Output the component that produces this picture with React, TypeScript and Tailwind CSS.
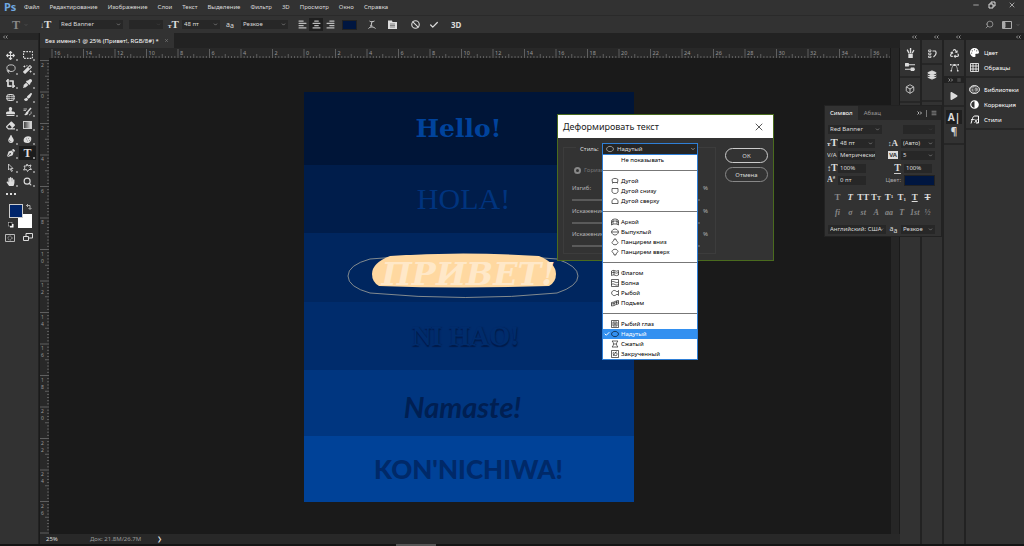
import type { ReactNode } from 'react'
import clsx from 'clsx'
import {
  Ban,
  Box,
  Check,
  ChevronDown,
  Lasso,
  Layers,
  Menu,
  Minus,
  Search,
  SquareDashed,
  X,
} from 'lucide-react'
import {
  FaAlignCenter,
  FaAlignLeft,
  FaAlignRight,
  FaAdjust,
  FaArrowsAlt,
  FaCropAlt,
  FaEraser,
  FaEyeDropper,
  FaHandPaper,
  FaMagic,
  FaPaintBrush,
  FaPalette,
  FaPenNib,
  FaPlay,
  FaRecycle,
  FaStamp,
  FaTint,
} from 'react-icons/fa'

const menuItems = [
  'Файл',
  'Редактирование',
  'Изображение',
  'Слои',
  'Текст',
  'Выделение',
  'Фильтр',
  '3D',
  'Просмотр',
  'Окно',
  'Справка',
]

export default function App() {
  return (
    <div className="relative flex h-screen flex-col overflow-hidden bg-[#1a1a1a] font-['Noto_Sans',sans-serif] text-[6px] leading-[8px] text-[#dcdcdc]">
      <MenuBar />
      <OptionsBar />
      <div className="flex min-h-0 flex-1">
        <Toolbox />
        <Workspace />
        <SidePanels />
      </div>
      <div className="flex h-[2px] shrink-0 justify-center bg-[#141414]">
        <div className="mr-48 w-10 bg-[#555]" />
      </div>
      <WarpDialog />
      <CharacterPanel />
    </div>
  )
}

function MenuBar() {
  return (
    <header className="flex h-4 shrink-0 items-center border-b border-[#2a2a2a] bg-[#323232] pr-2 pb-px pl-1">
      <div className="w-5 text-[11px] leading-[14px] font-bold text-[#6fa8e0]">Ps</div>
      <nav className="flex flex-1 items-center gap-[10px]">
        {menuItems.map((item) => (
          <button key={item}>{item}</button>
        ))}
      </nav>
      <div className="flex items-center gap-2 pb-1">
        <button aria-label="Свернуть">
          <Minus size={8} />
        </button>
        <button aria-label="Восстановить">
          <svg width="8" height="8" viewBox="0 0 16 16" fill="none" stroke="currentColor" strokeWidth="2">
            <path d="M2 6h8v8H2zM6 6V2h8v8h-4" />
          </svg>
        </button>
        <button aria-label="Закрыть" className="ml-1">
          <X size={8} />
        </button>
      </div>
    </header>
  )
}

interface PickerProps {
  label: string
  value?: string
  className: string
  disabled?: boolean
}

function Picker({ label, value = '', className, disabled }: PickerProps) {
  return (
    <div className={clsx('relative h-[9px] shrink-0 bg-[#272727]', className)}>
      <select
        aria-label={label}
        disabled={disabled}
        className="block h-full w-full appearance-none pl-[2px] leading-[9px] outline-none"
      >
        <option>{value}</option>
      </select>
      <ChevronDown
        size={5}
        strokeWidth={3}
        className={clsx(
          'pointer-events-none absolute top-[2px] right-[2px]',
          disabled ? 'text-[#444]' : 'text-[#999]',
        )}
      />
    </div>
  )
}

function Glyph({ children, className }: { children: ReactNode; className?: string }) {
  return (
    <span className={clsx("font-['Liberation_Serif',serif] leading-[10px] font-bold", className)}>
      {children}
    </span>
  )
}

function SizeIcon() {
  return (
    <Glyph className="text-[11px]">
      <span className="text-[7px]">т</span>T
    </Glyph>
  )
}

function AntiAliasIcon() {
  return (
    <span className="text-[7px]">
      a<sub className="text-[7px]">a</sub>
    </span>
  )
}

function OptionsBar() {
  return (
    <div className="flex h-[17px] shrink-0 items-center bg-[#323232] pr-1">
      <div className="flex w-10 items-center gap-1 pl-3 text-[#888]">
        <Glyph className="text-[12px]">T</Glyph>
        <ChevronDown size={4} />
      </div>
      <button aria-label="Ориентация текста" className="w-[19px] text-left">
        <Glyph className="text-[11px]">
          <span className="text-[8px]">↓</span>T
        </Glyph>
      </button>
      <Picker label="Гарнитура" value="Red Banner" className="w-16" />
      <Picker label="Начертание" disabled className="ml-[6px] w-[34px]" />
      <div className="w-[19px] pl-[5px]">
        <SizeIcon />
      </div>
      <Picker label="Кегль" value="48 пт" className="w-[38px]" />
      <div className="w-[21px] pl-[6px]">
        <AntiAliasIcon />
      </div>
      <Picker label="Сглаживание" value="Резкое" className="w-[47px]" />
      <div className="ml-[7px] flex text-[#bbb]">
        <button aria-label="Влево" className="flex h-[13px] w-[14px] items-center justify-center">
          <FaAlignLeft size={9} />
        </button>
        <button aria-label="По центру" className="flex h-[13px] w-[14px] items-center justify-center bg-[#1f1f1f]">
          <FaAlignCenter size={9} />
        </button>
        <button aria-label="Вправо" className="flex h-[13px] w-[14px] items-center justify-center">
          <FaAlignRight size={9} />
        </button>
      </div>
      <button aria-label="Цвет текста" className="ml-[5px] h-[10px] w-[15px] border border-[#222] bg-[#001640]" />
      <button aria-label="Деформировать" className="ml-[11px]">
        <svg width="8" height="9" viewBox="0 0 16 18" fill="none" stroke="currentColor" strokeWidth="1.8">
          <path d="M3 2c3 2 6 2 10 0M8 3L6 12M4 12h5M1 17c3-4 10-4 14 0" />
        </svg>
      </button>
      <button aria-label="Панели" className="ml-3">
        <svg width="9" height="9" viewBox="0 0 18 18" fill="#ddd">
          <path d="M0 1h8l1 3h9v14H0z" />
          <path d="M4 8h10M4 11h10M4 14h10" stroke="#444" strokeWidth="1.2" />
        </svg>
      </button>
      <button aria-label="Отменить" className="ml-[14px]">
        <Ban size={9} strokeWidth={3} />
      </button>
      <button aria-label="Применить" className="ml-[9px]">
        <Check size={10} strokeWidth={3} />
      </button>
      <button className="ml-3 text-[8px] font-bold">3D</button>
      <div className="flex-1" />
      <button aria-label="Поиск" className="mr-2 text-[#aaa]">
        <Search size={9} className="-scale-x-100" />
      </button>
      <button aria-label="Рабочая среда" className="flex items-center gap-1 text-[#aaa]">
        <svg width="10" height="8" viewBox="0 0 20 16" fill="none" stroke="currentColor" strokeWidth="2">
          <path d="M1 1h18v14H1z" />
          <path d="M2 3h4v10H2z" fill="currentColor" />
        </svg>
        <ChevronDown size={4} />
      </button>
    </div>
  )
}

function SvgIcon({ children, size = 9 }: { children: ReactNode; size?: number }) {
  return (
    <svg
      width={size}
      height={size}
      viewBox="0 0 18 18"
      fill="none"
      stroke="currentColor"
      strokeWidth="2"
      strokeLinejoin="round"
    >
      {children}
    </svg>
  )
}

const tools: { name: string; icon: ReactNode; active?: boolean }[] = [
  { name: 'Перемещение', icon: <FaArrowsAlt size={9} /> },
  { name: 'Прямоугольная область', icon: <SvgIcon size={10}><path d="M1 3h16v12H1z" strokeDasharray="3 2" /></SvgIcon> },
  { name: 'Лассо', icon: <Lasso size={10} /> },
  { name: 'Волшебная палочка', icon: <FaMagic size={9} /> },
  { name: 'Рамка', icon: <FaCropAlt size={9} /> },
  { name: 'Пипетка', icon: <FaEyeDropper size={9} /> },
  {
    name: 'Заплатка',
    icon: (
      <SvgIcon>
        <rect x="2" y="3" width="14" height="12" rx="3" />
        <path d="M0 7h18M0 11h18M6 3v12M12 3v12" strokeWidth="1.2" />
      </SvgIcon>
    ),
  },
  { name: 'Кисть', icon: <FaPaintBrush size={8} /> },
  { name: 'Штамп', icon: <FaStamp size={9} /> },
  {
    name: 'Архивная кисть',
    icon: (
      <SvgIcon>
        <path d="M16 2l-7 8" strokeWidth="3" />
        <path d="M9 9c-4 0-3 5-7 7 5 1 9-1 9-5z" fill="currentColor" stroke="none" />
        <path d="M1 4h7M1 7h5M12 16c4-1 5-4 4-7" strokeWidth="1.5" />
      </SvgIcon>
    ),
  },
  { name: 'Ластик', icon: <FaEraser size={9} /> },
  {
    name: 'Градиент',
    icon: <span className="block h-[8px] w-[9px] border border-[#ccc] bg-linear-to-r from-[#444] to-[#ddd]" />,
  },
  { name: 'Размытие', icon: <FaTint size={8} /> },
  {
    name: 'Губка',
    icon: (
      <SvgIcon>
        <path
          d="M2 7c3-5 9-6 14-3 1 4 1 8-3 11-4 2-8 1-11-1-1-2-1-5 0-7z"
          fill="currentColor"
          stroke="none"
        />
        <path d="M6 8h1M10 7h1M8 12h1M12 11h1" stroke="#555" />
      </SvgIcon>
    ),
  },
  { name: 'Перо', icon: <FaPenNib size={8} /> },
  { name: 'Текст', icon: <Glyph className="text-[12px]">T</Glyph>, active: true },
  {
    name: 'Выделение контура',
    icon: (
      <SvgIcon>
        <path d="M5 2v12l3-3 3 6 2-1-3-5h4z" strokeWidth="1.6" />
      </SvgIcon>
    ),
  },
  {
    name: 'Произвольная фигура',
    icon: (
      <SvgIcon>
        <path d="M8 2l2 4 6-2-2 5 3 4-5 0-3 4-2-4-6 1 3-4-2-4 5 0z" strokeWidth="1.8" />
      </SvgIcon>
    ),
  },
  { name: 'Рука', icon: <FaHandPaper size={9} /> },
  { name: 'Масштаб', icon: <Search size={9} strokeWidth={3} /> },
]

function Toolbox() {
  return (
    <aside className="flex w-[39px] shrink-0 flex-col border-r border-[#222] bg-[#323232]">
      <div className="flex h-[7px] items-center bg-[#262626] pl-[3px] text-[#aaa]">
        <DoubleChevron left />
      </div>
      <div className="mt-2 grid grid-cols-2 px-[2px]">
        {tools.map((tool) => (
          <button
            key={tool.name}
            aria-label={tool.name}
            className={clsx(
              'relative flex h-[14px] items-center justify-center',
              tool.active && 'bg-[#1c1c1c]',
            )}
          >
            {tool.icon}
            <span className="absolute right-[1px] bottom-[1px] size-[2px] bg-[#888]" />
          </button>
        ))}
        <button aria-label="Ещё" className="flex h-[12px] items-center justify-center gap-[2px]">
          <span className="size-[2px] bg-[#ddd]" />
          <span className="size-[2px] bg-[#ddd]" />
          <span className="size-[2px] bg-[#ddd]" />
        </button>
      </div>
      <div className="relative mt-1 ml-2 h-6 w-6">
        <button aria-label="Цвет фона" className="absolute right-0 bottom-0 size-[14px] bg-white" />
        <button
          aria-label="Основной цвет"
          className="absolute top-0 left-[1px] size-[14px] border border-[#ccc] bg-[#00256b]"
        />
        <svg className="absolute top-0 right-0" width="6" height="6" viewBox="0 0 12 12" fill="none" stroke="#ccc" strokeWidth="1.6">
          <path d="M4 0L1 3l3 3M1 3h7v7M5 8l3 3 3-3" />
        </svg>
        <svg className="absolute bottom-0 left-0" width="6" height="6" viewBox="0 0 12 12">
          <rect x="4" y="4" width="7" height="7" fill="#fff" />
          <rect x="1" y="1" width="7" height="7" fill="#111" stroke="#ccc" />
        </svg>
      </div>
      <div className="mt-[5px] flex gap-2 pl-[5px]">
        <button aria-label="Быстрая маска">
          <svg width="10" height="8" viewBox="0 0 20 16" fill="none" stroke="currentColor" strokeWidth="1.6">
            <path d="M1 1h18v14H1z" />
            <circle cx="10" cy="8" r="4" strokeDasharray="2 1.5" />
          </svg>
        </button>
        <button aria-label="Режим экрана">
          <svg width="10" height="9" viewBox="0 0 20 18" fill="none" stroke="currentColor" strokeWidth="2">
            <path d="M6 1h13v9H6z" />
            <path d="M1 7h10v8H1z" fill="#323232" />
          </svg>
        </button>
      </div>
    </aside>
  )
}

function DoubleChevron({ left }: { left?: boolean }) {
  return (
    <svg width="5" height="4" viewBox="0 0 10 8" fill="none" stroke="currentColor" strokeWidth="1.6">
      <path d={left ? 'M4 1L1 4l3 3M9 1L6 4l3 3' : 'M1 1l3 3-3 3M6 1l3 3-3 3'} />
    </svg>
  )
}

// distance between two labelled marks, i.e. two centimetres at 25%
const RULER_STEP = 31.5

function ticksFor(origin: number, length: number) {
  const ticks: { pos: number; index: number }[] = []
  const first = Math.ceil((-origin / RULER_STEP) * 10)
  for (let i = first; origin + (i * RULER_STEP) / 10 < length; i++) {
    ticks.push({ pos: origin + (i * RULER_STEP) / 10, index: i })
  }
  return ticks
}

function tickLength(index: number) {
  if (index % 10 === 0) return 9
  return index % 5 === 0 ? 4 : 2
}

function HorizontalRuler() {
  return (
    <svg className="block h-[10px] w-full bg-[#282828]">
      {ticksFor(264, 850)
        .filter((t) => t.pos > 9)
        .map(({ pos, index }) => (
          <g key={index}>
            <path d={`M${pos} 10v-${tickLength(index)}`} stroke="#777" strokeWidth="0.7" />
            {index % 10 === 0 && (
              <text x={pos + 2} y="7" fontSize="5.5" fill="#999">
                {Math.abs(index / 5)}
              </text>
            )}
          </g>
        ))}
    </svg>
  )
}

function VerticalRuler() {
  return (
    <svg className="h-full w-[9px] shrink-0 bg-[#282828]">
      {ticksFor(34, 476).map(({ pos, index }) => (
        <g key={index}>
          <path d={`M9 ${pos}h-${tickLength(index)}`} stroke="#777" strokeWidth="0.7" />
          {index % 10 === 0 &&
            pos < 460 &&
            String(Math.abs(index / 5))
              .split('')
              .map((digit, i) => (
                <text key={i} x="1" y={pos + 6 + i * 7} fontSize="5" fill="#999">
                  {digit}
                </text>
              ))}
        </g>
      ))}
    </svg>
  )
}

function Workspace() {
  return (
    <main className="flex min-w-0 flex-1 flex-col pl-[1px]">
      <div className="flex h-[15px] shrink-0 bg-[#222]">
        <div className="flex items-center gap-[5px] bg-[#323232] px-[5px] text-white">
          Без имени-1 @ 25% (Привет!, RGB/8#) *
          <button aria-label="Закрыть вкладку" className="text-[#999]">
            <X size={5} />
          </button>
        </div>
      </div>
      <div className="flex min-h-0 flex-1">
        <div className="flex min-w-0 flex-1 flex-col">
          <HorizontalRuler />
          <div className="flex min-h-0 flex-1">
            <VerticalRuler />
            <div className="flex min-w-0 flex-1 items-center justify-center pt-0.5 pr-0.5">
              <Artboard />
            </div>
          </div>
        </div>
        <div className="w-[10px] border-x border-[#1a1a1a] bg-[#262626]" />
      </div>
      <footer className="flex h-[10px] shrink-0 items-center bg-[#282828] pl-[6px]">
        <div className="w-11">25%</div>
        <div className="w-[67px] text-[#999]">Док: 21.8M/26.7M</div>
        <div>❯</div>
      </footer>
    </main>
  )
}

function Artboard() {
  return (
    <div className="flex w-[330px] flex-col text-center leading-[30px]">
      <div className="flex h-[73px] items-center justify-center bg-[#001538]">
        <span className="mr-5 font-['DejaVu_Serif',serif] text-[25px] font-bold text-[#00439c]">Hello!</span>
      </div>
      <div className="flex h-[68px] items-center justify-center bg-[#001d4b]">
        <span className="mr-[10px] font-['Liberation_Serif',serif] text-[30px] text-[#00347e]">HOLA!</span>
      </div>
      <div className="relative flex h-[69px] items-center justify-center bg-[#00265f]">
        <svg className="absolute -left-[2px] top-[18px] h-[50px] w-[332px]" viewBox="0 0 332 50" fill="none">
          <path
            d="M68 8Q46 14 46 25T68 42Q165 51 255 42Q276 35 276 25T255 8Q160 -1 68 8Z"
            stroke="#a3a39a"
            strokeWidth="0.8"
          />
          <path d="M88 5Q70 12 70 23Q70 31 77 35Q160 38 247 35Q254 31 254 23Q254 12 237 5Q160 0 88 5Z" fill="#ffd8a0" />
        </svg>
        <span className="relative mt-[13px] font-['DejaVu_Serif',serif] text-[32px] font-bold text-[#ffe8c8] italic">
          ПРИВЕТ!
        </span>
      </div>
      <div className="flex h-[68px] items-center justify-center bg-[#002c6c]">
        <span className="mr-[6px] font-['Liberation_Serif',serif] text-[27px] font-bold text-[#002c6c] [text-shadow:0_2px_1px_#001b4a,1px_0_1px_#00235a]">
          NI HAO!
        </span>
      </div>
      <div className="flex h-[66px] items-center justify-center bg-[#003680]">
        <span className="mt-2 mr-3 font-['Lato',sans-serif] text-[29px] font-bold text-[#001f52] italic">
          Namaste!
        </span>
      </div>
      <div className="flex h-[66px] items-center justify-center bg-[#004298]">
        <span className="font-['Lato',sans-serif] text-[26px] font-black text-[#002968]">KON'NICHIWA!</span>
      </div>
    </div>
  )
}

function SideButton({ label, children, active }: { label: string; children: ReactNode; active?: boolean }) {
  return (
    <button
      aria-label={label}
      className={clsx('flex h-[14px] w-full items-center justify-center', active && 'bg-[#1f1f1f]')}
    >
      {children}
    </button>
  )
}

const libraryPanels = [
  { name: 'Библиотеки', icon: 'cloud' },
  { name: 'Коррекция', icon: 'adjust' },
  { name: 'Стили', icon: 'fx' },
]

function PanelIcon({ icon }: { icon: string }) {
  if (icon === 'adjust') return <FaAdjust size={9} className="-scale-x-100" />
  if (icon === 'fx') {
    return (
      <SvgIcon>
        <path d="M2 17L5 7c1-4 3-5 5-5h7v14h-5" />
        <path d="M2 9h6M9 8l6 8M15 8l-6 8" strokeWidth="1.6" />
      </SvgIcon>
    )
  }
  return (
    <svg width="11" height="9" viewBox="0 0 22 18" fill="none" stroke="currentColor" strokeWidth="1.6">
      <ellipse cx="11" cy="9" rx="10" ry="8" fill="#999" />
      <circle cx="8" cy="10" r="4" stroke="#333" />
      <circle cx="14" cy="9" r="5" stroke="#333" />
    </svg>
  )
}

function SidePanels() {
  return (
    <aside className="flex w-[124px] shrink-0 flex-col bg-[#222]">
      <div className="flex h-[7px] items-center gap-0.5 text-[#aaa]">
        {[0, 1, 2].map((i) => (
          <div key={i} className="flex w-5 justify-end pr-[3px]">
            <DoubleChevron left />
          </div>
        ))}
        <div className="flex flex-1 justify-end pr-[3px]">
          <DoubleChevron left />
        </div>
      </div>
      <div className="flex flex-1 gap-0.5">
        <div className="w-5 bg-[#323232] pt-[6px]">
          <SideButton label="Кисти">
            <SvgIcon size={10}>
              <path d="M6 10h8v8H6z" fill="currentColor" stroke="none" />
              <path d="M7 9L4 3M10 9V0M13 9l3-5" strokeWidth="2.5" />
            </SvgIcon>
          </SideButton>
          <SideButton label="Параметры кисти">
            <SvgIcon size={10}>
              <path d="M0 5h18M0 13h18" />
              <path d="M1 3h5v4H1zM11 11h5v4h-5z" fill="currentColor" />
            </SvgIcon>
          </SideButton>
          <div className="mt-[2px] mb-[4px] border-t-2 border-[#262626]" />
          <SideButton label="3D">
            <Box size={10} />
          </SideButton>
          <div className="mt-[5px] border-t-2 border-[#262626]" />
        </div>
        <div className="w-5 bg-[#323232] pt-[6px]">
          <SideButton label="История">
            <SvgIcon size={9}>
              <path d="M1 2h5v3H1zM1 8h5v3H1zM1 14h5v3H1z" strokeWidth="1.6" />
              <path d="M9 4h6c3 5 0 9-4 12" strokeWidth="2.4" />
            </SvgIcon>
          </SideButton>
          <div className="my-[3px] border-t-2 border-[#262626]" />
          <SideButton label="Слои">
            <Layers size={10} fill="currentColor" />
          </SideButton>
          <div className="mt-[18px] border-t-2 border-[#262626]" />
        </div>
        <div className="w-5 bg-[#323232] pt-[6px]">
          <SideButton label="Каналы">
            <FaRecycle size={9} />
          </SideButton>
          <SideButton label="Контуры">
            <SvgIcon>
              <path d="M3 4h12M3 16C3 9 6 4 9 4s6 5 6 12" strokeWidth="1.5" />
              <path d="M0 2h3v3H0zM15 2h3v3h-3zM7 2h4v4H7zM1 14h3v3H1zM14 14h3v3h-3z" fill="currentColor" stroke="none" />
            </SvgIcon>
          </SideButton>
          <div className="mt-[2px] flex h-[7px] items-center justify-end gap-[4px] bg-[#222] pr-[3px] text-[#aaa]">
            <DoubleChevron />
            <Menu size={4} />
          </div>
          <div className="pt-[6px]">
            <SideButton label="Операции">
              <FaPlay size={8} />
            </SideButton>
          </div>
          <div className="mt-[2px] mb-[3px] border-t-2 border-[#262626]" />
          <div className="px-[2px]">
            <SideButton label="Символ" active>
              <span className="text-[10px] font-bold">A|</span>
            </SideButton>
            <SideButton label="Абзац">
              <span className="text-[10px] font-bold">¶</span>
            </SideButton>
          </div>
          <div className="mt-[5px] border-t-2 border-[#262626]" />
        </div>
        <div className="flex-1 bg-[#323232] pt-[5px] text-white">
          <button className="flex h-[15px] items-center gap-[5px] pl-1">
            <FaPalette size={9} />
            Цвет
          </button>
          <button className="flex h-[15px] items-center gap-[5px] pl-1">
            <SvgIcon>
              <path d="M1 1h16v16H1zM1 6h16M1 12h16M6 1v16M12 1v16" strokeWidth="1.6" />
            </SvgIcon>
            Образцы
          </button>
          <div className="mt-[1px] mb-[4px] border-t-2 border-[#262626]" />
          {libraryPanels.map((panel) => (
            <button key={panel.name} className="flex h-[15px] items-center gap-1 pl-[3px]">
              <span className="flex w-[11px] justify-center">
                <PanelIcon icon={panel.icon} />
              </span>
              {panel.name}
            </button>
          ))}
          <div className="mt-[1px] border-t-2 border-[#262626]" />
        </div>
      </div>
    </aside>
  )
}

const warpShapes: Record<string, string> = {
  Дугой: 'M2 5c4-3 8-3 12 0l-1 6H3zM4 11l-1 2M12 11l1 2',
  'Дугой снизу': 'M2 3h12v7c-3 4-9 4-12 0z',
  'Дугой сверху': 'M2 13V8c1-6 11-6 12 0v5z',
  Аркой: 'M1 5c4-4 10-4 14 0v9c-4-3-10-3-14 0zM1 9c4-4 10-4 14 0M4 3v9M12 3v9',
  Выпуклый: 'M1 8c2-8 12-8 14 0-2 8-12 8-14 0zM1 8h14',
  'Панцирем вниз': 'M6 2h4v2l4 5c-1 6-11 6-12 0l4-5z',
  'Панцирем вверх': 'M6 14h4v-2l4-5C13 1 3 1 2 7l4 5z',
  Флагом: 'M1 4c4-4 9 3 14-1v9c-5 4-10-3-14 1zM1 8c4-4 9 3 14-1M6 3v9',
  Волна: 'M1 1h14v14H1zM1 6c5-4 8 4 14 0M1 11c5-4 8 4 14 0',
  Рыбой: 'M1 8c2-7 8-6 11-2l3-3v10l-3-3c-3 4-9 5-11-2z',
  Подъем: 'M1 7c6 0 8-4 14-4v7c-6 0-8 4-14 4zM1 10c6 0 8-4 14-4M6 6v7M11 4v7',
  'Рыбий глаз': 'M1 1h14v14H1zM4 4h8v8H4zM6 8a2 2 0 104 0 2 2 0 10-4 0',
  Надутый: 'M1 8C2 1 14 1 15 8 14 15 2 15 1 8z',
  Сжатый: 'M2 2h12c-4 4-4 8 0 12H2c4-4 4-8 0-12zM5 8h6',
  Закрученный: 'M1 1h14v14H1zM5 4c-2 5 1 8 6 7 3-4-1-8-4-5M4 12l7-9',
}

const warpGroups = [
  ['Не показывать'],
  ['Дугой', 'Дугой снизу', 'Дугой сверху'],
  ['Аркой', 'Выпуклый', 'Панцирем вниз', 'Панцирем вверх'],
  ['Флагом', 'Волна', 'Рыбой', 'Подъем'],
  ['Рыбий глаз', 'Надутый', 'Сжатый', 'Закрученный'],
]

function WarpIcon({ name }: { name: string }) {
  return (
    <svg width="8" height="8" viewBox="0 0 16 16" fill="none" stroke="currentColor" strokeWidth="1.2">
      <path d={warpShapes[name]} />
    </svg>
  )
}

function WarpMenu({ selected }: { selected: string }) {
  return (
    <div
      role="listbox"
      aria-label="Стиль"
      className="absolute top-full left-0 z-20 w-full border-x border-b border-[#2f7fd6] bg-white text-black"
    >
      {warpGroups.map((group, i) => (
        <div key={i}>
          {i > 0 && (
            <div className="flex h-[11px] items-center">
              <div className="h-px w-full bg-[#777]" />
            </div>
          )}
          {group.map((name) => (
            <div
              key={name}
              role="option"
              aria-selected={name === selected}
              className={clsx(
                'flex h-[10px] items-center whitespace-nowrap',
                name === selected && 'bg-[#3390f0]',
              )}
            >
              <span className="w-2 pl-[1px] text-white">
                {name === selected && <Check size={6} strokeWidth={4} />}
              </span>
              <span className="w-[10px]">{warpShapes[name] && <WarpIcon name={name} />}</span>
              <span className={clsx(name === selected && 'text-white')}>{name}</span>
            </div>
          ))}
        </div>
      ))}
    </div>
  )
}

function WarpSlider({ id, label }: { id: string; label: string }) {
  return (
    <div className="h-[23px]">
      <div className="flex h-3 items-center justify-between">
        <label htmlFor={id}>{label}</label>
        <span className="-mr-[1px]">%</span>
      </div>
      <input
        id={id}
        type="range"
        className="mt-[5px] block h-[2px] w-32 appearance-none bg-[#5a5a5a] [&::-webkit-slider-thumb]:size-0 [&::-webkit-slider-thumb]:appearance-none"
      />
    </div>
  )
}

function WarpDialog() {
  return (
    <section
      role="dialog"
      aria-label="Деформировать текст"
      className="absolute top-[114px] left-[557px] z-10 w-[217px] border border-[#4a6b1e] bg-[#333]"
    >
      <div className="flex h-[23px] items-center justify-between bg-white pr-2 pl-[5px] text-[#222]">
        <h1 className="text-[9px]">Деформировать текст</h1>
        <button aria-label="Закрыть">
          <X size={12} strokeWidth={1.5} />
        </button>
      </div>
      <div className="flex h-[122px] justify-between pr-[5px] pl-[5px]">
        <div className="relative mt-[9px] mb-[6px] w-[153px] border border-[#3c3c3c] px-[8px] text-[#b4b4b4]">
          <div className="absolute -top-[5px] left-[12px] flex h-[12px] items-center bg-[#333] pl-1 text-[#dcdcdc]">
            <label htmlFor="warp-style" className="w-[22px]">
              Стиль:
            </label>
            <div className="relative h-full w-24">
              <select
                id="warp-style"
                className="block h-full w-full appearance-none border border-[#2f7fd6] bg-[#252525] pl-[14px] leading-[10px] outline-none"
              >
                <option>Надутый</option>
              </select>
              <span className="pointer-events-none absolute top-[2px] left-1">
                <WarpIcon name="Надутый" />
              </span>
              <ChevronDown size={6} className="pointer-events-none absolute top-[3px] right-[2px]" />
              <WarpMenu selected="Надутый" />
            </div>
          </div>
          <div className="mt-[16px] flex h-3 items-center gap-[14px] pl-[2px] text-[#777]">
            <label className="flex items-center gap-[3px]">
              <input
                type="radio"
                name="orientation"
                defaultChecked
                className="m-0 size-[7px] appearance-none rounded-full border-2 border-[#888]"
              />
              Горизонтально
            </label>
            <label className="flex items-center gap-[3px]">
              <input
                type="radio"
                name="orientation"
                className="m-0 size-[7px] appearance-none rounded-full border border-[#888]"
              />
              Вертикально
            </label>
          </div>
          <div className="mt-[6px]">
            <WarpSlider id="warp-bend" label="Изгиб:" />
            <WarpSlider id="warp-h" label="Искажение по горизонтали:" />
            <WarpSlider id="warp-v" label="Искажение по вертикали:" />
          </div>
        </div>
        <div className="mt-[10px] flex w-[43px] flex-col gap-1">
          <button className="h-[15px] rounded-full border border-[#ccc]">ОК</button>
          <button className="h-[15px] rounded-full border border-[#888]">Отмена</button>
        </div>
      </div>
    </section>
  )
}

function Field({ label, value }: { label: string; value: string }) {
  return (
    <input aria-label={label} defaultValue={value} className="h-[9px] w-7 bg-[#272727] pl-[2px] outline-none" />
  )
}

const fontStyles = [
  { label: 'Полужирный', glyph: <span className="text-[#888]">T</span> },
  { label: 'Курсив', glyph: <i>T</i> },
  { label: 'Все прописные', glyph: 'TT' },
  { label: 'Малые прописные', glyph: <>T<small className="text-[6px]">T</small></> },
  { label: 'Верхний индекс', glyph: <>T<sup className="text-[5px]">1</sup></> },
  { label: 'Нижний индекс', glyph: <>T<sub className="text-[5px]">1</sub></> },
  { label: 'Подчёркнутый', glyph: <u>T</u> },
  { label: 'Зачёркнутый', glyph: <s>T</s> },
]

const openTypeGlyphs = ['fi', 'σ', 'st', 'A', 'aa', 'T', '1st', '½']

function CharacterPanel() {
  return (
    <section
      aria-label="Символ"
      className="absolute top-[105px] right-[82px] z-10 w-[118px] border border-[#222] bg-[#323232]"
    >
      <div className="flex h-[14px] items-center bg-[#262626] pr-1">
        <button className="h-full bg-[#323232] px-[5px] text-white">Символ</button>
        <button className="px-[6px] text-[#999]">Абзац</button>
        <div className="flex flex-1 items-center justify-end gap-1">
          <DoubleChevron />
          <span className="h-[7px] w-px bg-[#777]" />
          <Menu size={6} />
        </div>
      </div>
      <div className="flex flex-col pt-[3px] pr-[6px] pb-[1px] pl-[2px]">
        <div className="flex h-3 items-center justify-between pl-[1px]">
          <Picker label="Гарнитура символа" value="Red Banner" className="w-[54px]" />
          <Picker label="Начертание символа" disabled className="w-8" />
        </div>
        <div className="mt-[2px] grid grid-cols-[11px_37px_1fr_34px] items-center">
          <CellIcon>
            <SizeIcon />
          </CellIcon>
          <Picker label="Кегль символа" value="48 пт" className="w-full" />
          <CellIcon right>
            <Glyph className="text-[9px]">
              <span className="text-[7px]">↕</span>A
            </Glyph>
          </CellIcon>
          <Picker label="Интерлиньяж" value="(Авто)" className="w-full" />
          <CellIcon>
            <span>V/A</span>
          </CellIcon>
          <Picker label="Кернинг" value="Метрически" className="w-full" />
          <CellIcon right>
            <span className="bg-[#ddd] px-[1px] font-bold text-[#333]">VA</span>
          </CellIcon>
          <Picker label="Трекинг" value="5" className="w-full" />
        </div>
        <div className="mt-[1px] grid grid-cols-[11px_37px_1fr_31px] items-center">
          <CellIcon>
            <Glyph className="text-[10px]">
              <span className="text-[8px]">↕</span>T
            </Glyph>
          </CellIcon>
          <Field label="Масштаб по вертикали" value="100%" />
          <CellIcon right>
            <Glyph className="border-b border-[#ccc] text-[10px]">T</Glyph>
          </CellIcon>
          <Field label="Масштаб по горизонтали" value="100%" />
          <CellIcon>
            <Glyph className="text-[8px]">Aª</Glyph>
          </CellIcon>
          <Field label="Смещение базовой линии" value="0 пт" />
          <CellIcon right>
            <span className="text-[#aaa]">Цвет:</span>
          </CellIcon>
          <button aria-label="Цвет символа" className="h-[11px] w-full border border-[#222] bg-[#001640]" />
        </div>
        <div className="mt-[5px] flex h-3 items-center pr-[1px] pl-1">
          {fontStyles.map((style) => (
            <button key={style.label} aria-label={style.label} className="w-[13px]">
              <Glyph className="text-[9px] whitespace-nowrap">{style.glyph}</Glyph>
            </button>
          ))}
        </div>
        <div className="mt-1 flex h-3 items-center pr-[1px] pl-1 text-[#888]">
          {openTypeGlyphs.map((glyph) => (
            <button key={glyph} className="w-[13px]">
              <Glyph className="text-[8px] italic">{glyph}</Glyph>
            </button>
          ))}
        </div>
        <div className="mt-1 flex h-3 items-center justify-between pl-[1px]">
          <Picker label="Язык" value="Английский: США" className="w-[58px]" />
          <AntiAliasIcon />
          <Picker label="Сглаживание символа" value="Резкое" className="w-[34px]" />
        </div>
      </div>
    </section>
  )
}

function CellIcon({ children, right }: { children: ReactNode; right?: boolean }) {
  return (
    <span
      className={clsx('flex h-3 items-center overflow-hidden whitespace-nowrap', right && 'justify-end pr-[3px]')}
    >
      {children}
    </span>
  )
}
